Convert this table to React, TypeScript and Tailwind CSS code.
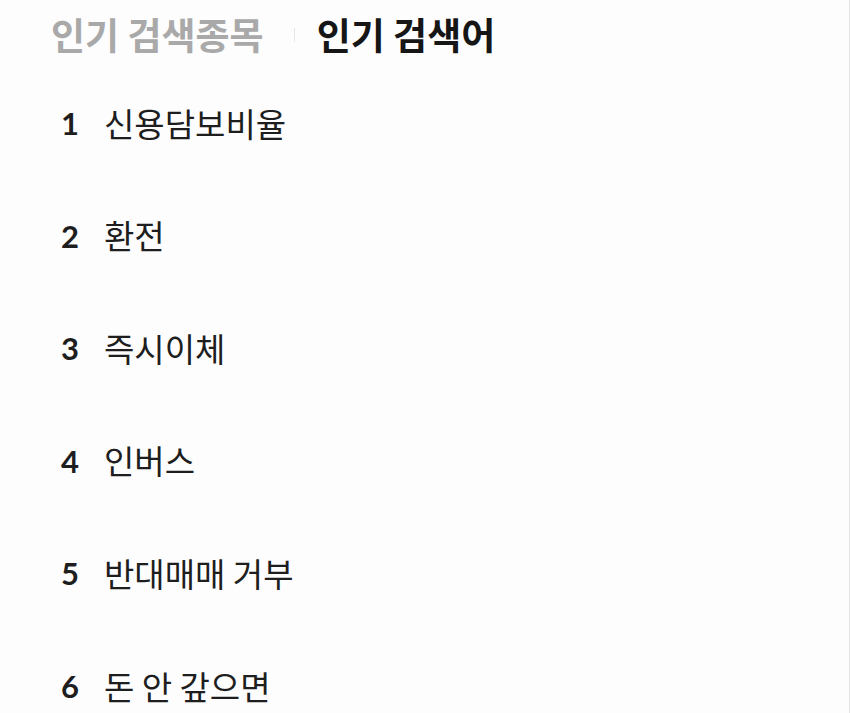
import React from "react";

const keywords = ["신용담보비율", "환전", "즉시이체", "인버스", "반대매매 거부", "돈 안 갚으면"];

export default function App() {
  return (
    <div className="w-[850px] h-[713px] overflow-hidden bg-[#fdfdfd] border-r border-[#e4e4e4] font-['Noto_Sans_CJK_KR','Noto_Sans',sans-serif]">
      <div className="flex items-center pl-[51px] pt-[3px] h-[67px]">
        <span className="text-[37px] font-bold text-[#a9a9a9]">인기 검색종목</span>
        <span className="ml-[30px] mr-[22px] w-px h-[14px] bg-[#e6e6e6]" />
        <span className="text-[37px] font-bold text-[#161616]">인기 검색어</span>
      </div>
      <ul className="pl-[61px]">
        {keywords.map((k, i) => (
          <li key={k} className="flex items-center h-[112.6px]">
            <span className="w-[43px] text-[31px] font-bold text-[#1e1e1e] font-['Lato',sans-serif]">{i + 1}</span>
            <span className="text-[33px] text-[#1e1e1e]">{k}</span>
          </li>
        ))}
      </ul>
    </div>
  );
}
